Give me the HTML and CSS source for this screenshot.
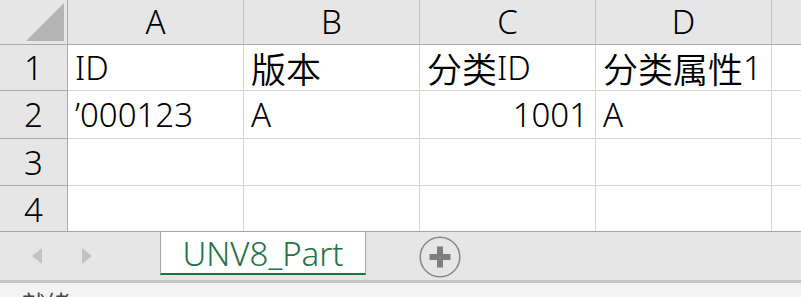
FILE: index.html
```html
<!DOCTYPE html>
<html lang="zh">
<head>
<meta charset="utf-8">
<link rel="stylesheet" href="styles.css">
</head>
<body>
<div class="app">
  <div class="sheet">
    <div class="grid">
      <div class="corner"><span class="tri"></span></div>
      <div class="colh">A</div>
      <div class="colh">B</div>
      <div class="colh">C</div>
      <div class="colh">D</div>
      <div class="colh last"></div>

      <div class="rowh r1">1</div>
      <div class="cell r1">ID</div>
      <div class="cell r1"><span class="zh">版本</span></div>
      <div class="cell r1"><span class="zh">分类</span>ID</div>
      <div class="cell r1"><span class="zh">分类属性</span>1</div>
      <div class="cell r1 last"></div>

      <div class="rowh r2">2</div>
      <div class="cell r2">’000123</div>
      <div class="cell r2">A</div>
      <div class="cell r2 num">1001</div>
      <div class="cell r2">A</div>
      <div class="cell r2 last"></div>

      <div class="rowh r3">3</div>
      <div class="cell r3"></div>
      <div class="cell r3"></div>
      <div class="cell r3"></div>
      <div class="cell r3"></div>
      <div class="cell r3 last"></div>

      <div class="rowh r4">4</div>
      <div class="cell r4"></div>
      <div class="cell r4"></div>
      <div class="cell r4"></div>
      <div class="cell r4"></div>
      <div class="cell r4 last"></div>
    </div>
  </div>
  <div class="tabbar">
    <div class="nav">
      <svg class="arrow" width="10" height="16" viewBox="0 0 10 16"><polygon points="10,0 10,16 0,8" fill="#c3c3c3"/></svg>
      <svg class="arrow" width="10" height="16" viewBox="0 0 10 16"><polygon points="0,0 0,16 10,8" fill="#c3c3c3"/></svg>
    </div>
    <div class="tab">UNV8_Part</div>
    <div class="add">
      <svg width="42" height="42" viewBox="0 0 42 42">
        <circle cx="21" cy="21" r="19.8" fill="none" stroke="#8a8a8a" stroke-width="1.6"/>
        <rect x="10.5" y="18" width="21" height="6" fill="#7f7f7f"/>
        <rect x="18" y="10.5" width="6" height="21" fill="#7f7f7f"/>
      </svg>
    </div>
  </div>
  <div class="sep"></div>
  <div class="status"><span class="zh-status">就绪</span></div>
</div>
</body>
</html>
```

FILE: styles.css
```css
html, body {
  margin: 0;
  padding: 0;
  background: #ffffff;
}

.app {
  width: 801px;
  height: 297px;
  overflow: hidden;
  font-family: "Noto Sans", "Noto Sans CJK SC", sans-serif;
  font-weight: 350;
  color: #000;
}

.sheet {
  height: 231px;
  overflow: hidden;
}

.grid {
  display: grid;
  grid-template-columns: 68px 176px 176px 176px 176px 40px;
  grid-template-rows: 45px 46px 48px 47px 47px;
}

.corner {
  background: #e6e6e6;
  border-right: 1px solid #ababab;
  border-bottom: 1px solid #ababab;
  position: relative;
}

.tri {
  position: absolute;
  left: 26px;
  top: 3px;
  width: 0;
  height: 0;
  border-left: 38px solid transparent;
  border-bottom: 38px solid #b4b4b4;
}

.colh {
  background: #e6e6e6;
  border-right: 1px solid #c4c4c4;
  border-bottom: 1px solid #ababab;
  display: flex;
  align-items: center;
  justify-content: center;
  font-size: 33px;
  line-height: 1;
  padding-bottom: 2px;
}

.colh.last, .cell.last {
  border-right: none;
}

.rowh {
  background: #e6e6e6;
  border-right: 1px solid #ababab;
  border-bottom: 1px solid #ababab;
  display: flex;
  align-items: center;
  justify-content: center;
  font-size: 33px;
  line-height: 1;
}

.cell {
  border-right: 1px solid #d4d4d4;
  border-bottom: 1px solid #d4d4d4;
  display: flex;
  align-items: center;
  padding-left: 7px;
  font-size: 33px;
  line-height: 1;
  white-space: nowrap;
}

.cell.num {
  justify-content: flex-end;
  padding-left: 0;
  padding-right: 7px;
}

.zh {
  font-family: "Noto Sans CJK SC", sans-serif;
  font-weight: 350;
  font-size: 35px;
}

.tabbar {
  height: 48px;
  background: #e6e6e6;
  border-top: 1px solid #a6a6a6;
  display: flex;
  align-items: flex-start;
}

.nav {
  width: 160px;
  display: flex;
  gap: 40px;
  padding-left: 32px;
  padding-top: 16px;
  box-sizing: border-box;
}

.tab {
  width: 206px;
  height: 44px;
  box-sizing: border-box;
  margin-top: -1px;
  background: #ffffff;
  border-left: 1px solid #a6a6a6;
  border-right: 1px solid #a6a6a6;
  border-top: 1px solid #a6a6a6;
  border-bottom: 2px solid #217346;
  color: #217346;
  font-size: 33px;
  line-height: 1;
  display: flex;
  align-items: center;
  justify-content: center;
  padding-top: 2px;
}

.add {
  margin-left: 53px;
  padding-top: 4px;
}

.add svg {
  display: block;
}

.sep {
  height: 3px;
  background: #c6c6c6;
}

.status {
  height: 14px;
  background: #f3f3f3;
  padding-left: 22px;
  padding-top: 8px;
  font-family: "Noto Sans CJK SC", sans-serif;
  font-weight: 400;
  font-size: 24px;
  line-height: 24px;
  color: #444;
}
```
